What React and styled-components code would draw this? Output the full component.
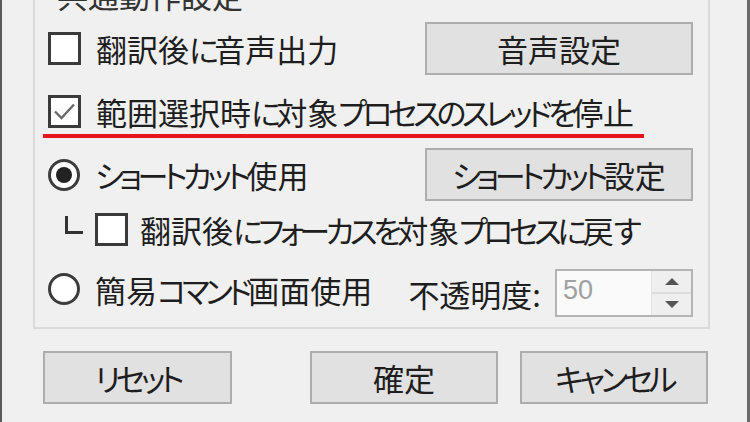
import React from 'react';
import styled, {createGlobalStyle} from 'styled-components';

const GlobalStyle = createGlobalStyle`
  html, body {
    margin: 0;
    padding: 0;
    background: #f0f0f0;
  }
  * {
    box-sizing: border-box;
  }
`

const FONT = `"Noto Sans CJK JP", "Noto Sans", sans-serif`

const Window = styled.div`
  width: 750px;
  height: 422px;
  overflow: hidden;
  background: #f0f0f0;
  border-left: 2px solid #5a5a5a;
  border-right: 3px solid #6a6a6a;
  padding-left: 31px;
  font-family: ${FONT};
  font-feature-settings: "palt";
  font-size: 31px;
  color: #1e1e1e;
`

const GroupBox = styled.div`
  position: relative;
  width: 677px;
  height: 332px;
  margin-top: -3px;
  border: 2px solid #dadada;
  padding: 23px 15px 0 13px;
`

const GroupTitle = styled.span`
  position: absolute;
  top: -20px;
  left: 20px;
  padding: 0 2px;
  line-height: 1;
  background: #f0f0f0;
  color: #333;
`

const Row = styled.div`
  display: flex;
  align-items: center;
  justify-content: space-between;
  height: ${p => p.$h}px;
  margin-top: ${p => p.$mt || 0}px;
`

const Option = styled.label`
  display: flex;
  align-items: center;
  gap: ${p => p.$gap || 15}px;
  margin-top: ${p => (p.$up ? -p.$up * 2 : 0)}px;
  line-height: 1;
  white-space: nowrap;
`

// Meiryo UI draws kana much narrower than Noto's, so tighten those runs
const Kana = styled.span`
  letter-spacing: -4.5px;
`

const KANA = /([\u3040-\u30ff]+)/

const JP = ({children}) => (
  <span>
    {children.split(KANA).map((part, i) =>
      KANA.test(part) ? <Kana key={i}>{part}</Kana> : part
    )}
  </span>
)

const Highlight = styled.div`
  display: inline-flex;
  margin-left: -5px;
  padding: 0 10px 6px 5px;
  margin-top: ${p => p.$mt}px;
  border-bottom: 4px solid #e8141d;
`

const Check = styled.span`
  position: relative;
  flex: none;
  width: 33px;
  height: 33px;
  background: #fff;
  border: 3px solid #3a3a3a;
`

const Radio = styled.span`
  position: relative;
  flex: none;
  width: 32px;
  height: 32px;
  border-radius: 50%;
  background: #fff;
  border: 3px solid #3c3c3c;

  &::after {
    content: "";
    display: ${p => (p.$on ? 'block' : 'none')};
    position: absolute;
    left: 5px;
    top: 5px;
    width: 16px;
    height: 16px;
    border-radius: 50%;
    background: #222;
  }
`

const Button = styled.button`
  width: ${p => p.$w || 268}px;
  height: 53px;
  padding: 0;
  background: #e1e1e1;
  border: 2px solid #adadad;
  font-family: ${FONT};
  font-feature-settings: "palt";
  font-size: 31px;
  line-height: 1;
  color: #1e1e1e;
`

const SubRow = styled.div`
  display: flex;
  align-items: center;
  height: 33px;
  margin-top: 12px;
  padding-left: 17px;
  line-height: 1;
  white-space: nowrap;
`

const Corner = styled.span`
  align-self: flex-start;
  flex: none;
  width: 18px;
  height: 18px;
  margin: 3px 12px 0 0;
  border-left: 3px solid #333;
  border-bottom: 3px solid #333;
`

const OpacityGroup = styled.div`
  display: flex;
  align-items: center;
  gap: 14px;
  line-height: 1;
`

const Spin = styled.div`
  display: flex;
  width: 138px;
  height: 48px;
  border: 2px solid #b4b4b4;
  background: #fafafa;
`

const SpinValue = styled.span`
  flex: 1;
  padding: 6px 0 0 6px;
  font-family: "Liberation Sans", sans-serif;
  font-size: 27px;
  color: #a0a0a0;
`

const SpinArrows = styled.div`
  display: flex;
  flex-direction: column;
  width: 40px;
  border-left: 1px solid #e2e2e2;
`

const SpinArrow = styled.span`
  flex: 1;
  display: flex;
  align-items: center;
  justify-content: center;
  background: #efefef;
  border-bottom: ${p => (p.$top ? '2px solid #dcdcdc' : 'none')};

  &::before {
    content: "";
    border-left: 7px solid transparent;
    border-right: 7px solid transparent;
    ${p => (p.$top ? 'border-bottom: 7px solid #555;' : 'border-top: 7px solid #555;')}
  }
`

const ButtonBar = styled.div`
  display: flex;
  justify-content: space-between;
  width: 677px;
  margin-top: 22px;
  padding: 0 2px 0 10px;
`

const RightButtons = styled.div`
  display: flex;
  gap: 22px;
`

const CheckMark = () => (
  <svg width="27" height="27" viewBox="0 0 27 27" style={{position: 'absolute', left: 0, top: 0}}>
    <path d="M4 13.5 L10.5 20 L23 6.5" fill="none" stroke="#6a6a6a" strokeWidth="2.4"/>
  </svg>
)

export default function App() {
  return (
    <Window>
      <GlobalStyle/>
      <GroupBox>
        <GroupTitle>共通動作設定</GroupTitle>

        <Row $h={53}>
          <Option>
            <Check/>
            <JP>翻訳後に音声出力</JP>
          </Option>
          <Button>音声設定</Button>
        </Row>

        <Highlight $mt={20}>
          <Option>
            <Check><CheckMark/></Check>
            <JP>範囲選択時に対象プロセスのスレッドを停止</JP>
          </Option>
        </Highlight>

        <Row $h={53} $mt={10}>
          <Option>
            <Radio $on/>
            <JP>ショートカット使用</JP>
          </Option>
          <Button><JP>ショートカット設定</JP></Button>
        </Row>

        <SubRow>
          <Corner/>
          <Option $gap={12}>
            <Check/>
            <JP>翻訳後にフォーカスを対象プロセスに戻す</JP>
          </Option>
        </SubRow>

        <Row $h={48} $mt={23}>
          <Option $up={4}>
            <Radio/>
            <JP>簡易コマンド画面使用</JP>
          </Option>
          <OpacityGroup>
            不透明度:
            <Spin>
              <SpinValue>50</SpinValue>
              <SpinArrows>
                <SpinArrow $top/>
                <SpinArrow/>
              </SpinArrows>
            </Spin>
          </OpacityGroup>
        </Row>
      </GroupBox>

      <ButtonBar>
        <Button $w={189}><JP>リセット</JP></Button>
        <RightButtons>
          <Button $w={188}>確定</Button>
          <Button $w={188}><JP>キャンセル</JP></Button>
        </RightButtons>
      </ButtonBar>
    </Window>
  );
}
